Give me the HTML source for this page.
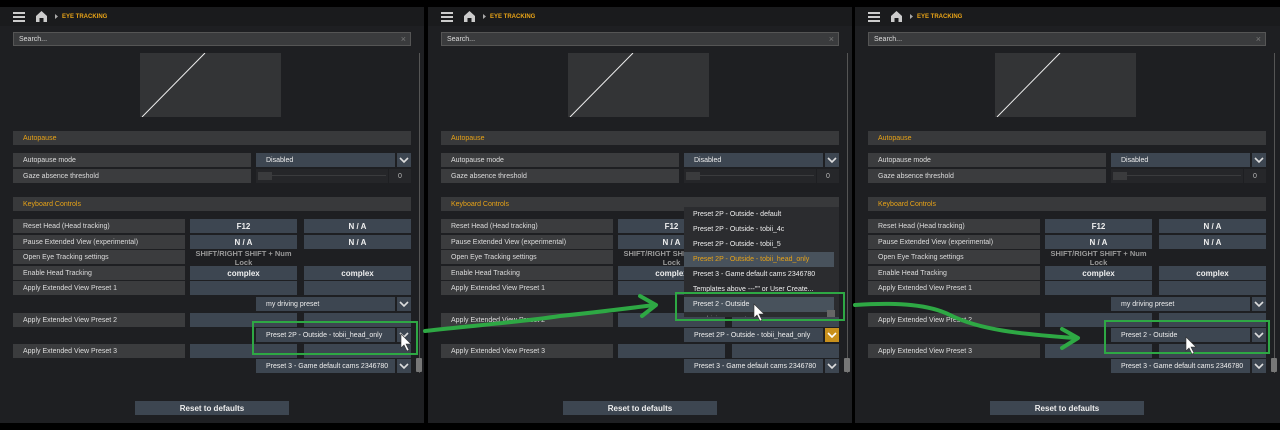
<!DOCTYPE html>
<html><head><meta charset="utf-8"><style>
*{margin:0;padding:0;box-sizing:border-box}
body{width:1280px;height:430px;background:#000;position:relative;overflow:hidden;font-family:"Liberation Sans",sans-serif;font-size:7px;color:#ddd;white-space:nowrap}
.p{position:absolute;top:7px;width:424px;height:416px;background:#1e1f22;overflow:hidden}
.p>.in{position:absolute;left:0;top:-7px;width:100%;height:430px}
.p div{position:absolute}
.bar{left:0;top:7px;width:100%;height:19px;background:#1a1b1d}
.hb{left:13px;width:12px;height:2px;background:#ccc}
.crumb{left:62px;top:14px;color:#e8a317;font-weight:bold;font-size:6px}
.search{left:13px;top:32px;width:398px;height:14px;background:#3a3b3d;border:1px solid #555;padding:3px 5px;color:#ddd}
.graph{left:140px;top:53px;width:141px;height:64px;background:#333436}
.sb{left:419px;top:53px;width:1px;height:320px;background:#555}
.th{left:416px;top:358px;width:6px;height:14px;background:#777;border-radius:1px}
.hdr{left:13px;width:398px;height:14px;background:#38393b;color:#e8a317;padding:4px 10px}
.lbl{left:13px;width:172px;height:14px;background:#3b3c3e;padding:4px 10px;color:#ddd}
.lbl.w{width:238px}
.dd{left:256px;width:139px;height:14px;background:#3d4651;padding:4px 10px;color:#eee;overflow:hidden}
.ch{left:397px;width:14px;height:14px;background:#3d4651}
.ch svg{position:absolute;left:2px;top:3px}
.k1,.k2{width:107px;height:14px;background:#3d4651;text-align:center;font-weight:bold;font-size:8px;color:#eee;padding-top:3px}
.k1{left:190px}.k2{left:304px}
.reset{left:135px;top:401px;width:154px;height:14px;background:#3d4651;text-align:center;font-weight:bold;font-size:8px;padding-top:3px;color:#eee}
.g{border:2px solid #2ea844}
.list{left:256px;top:207px;width:155px;height:110px;background:#2b2c2f;overflow:hidden}
.li{left:0;width:150px;height:15px;padding:4px 9px;color:#eee}
.sk{left:190px;top:249px;width:107px;text-align:center;font-weight:bold;font-size:7.5px;color:#999;line-height:9px;white-space:normal}
</style></head><body>

<div class="p" style="left:0"><div class="in">
<div class="bar"></div>
<div class="hb" style="top:12px"></div><div class="hb" style="top:16px"></div><div class="hb" style="top:20px"></div>
<svg style="position:absolute;left:36px;top:11px" width="11" height="11"><path d="M0 5 L5.5 0 L11 5 V11 H7.5 V7 H3.5 V11 H0Z" fill="#ccc"/></svg>
<svg style="position:absolute;left:55px;top:14px" width="4" height="5"><path d="M0 0 L3 2.5 L0 5Z" fill="#aaa"/></svg>
<div class="crumb">EYE TRACKING</div>
<div class="search">Search...<span style="position:absolute;right:4px;top:1px;color:#777;font-size:9px">×</span></div>
<div class="graph"><svg width="141" height="64"><line x1="2" y1="64" x2="65" y2="0" stroke="#eee" stroke-width="1"/></svg></div>
<div class="sb"></div><div class="th"></div>
<div class="hdr" style="top:131px">Autopause</div>
<div class="lbl w" style="top:153px">Autopause mode</div>
<div class="dd" style="top:153px">Disabled</div>
<div class="ch" style="top:153px"><svg width="10" height="8"><path d="M1 2 L5 6 L9 2" stroke="#ddd" stroke-width="1.6" fill="none"/></svg></div>
<div class="lbl w" style="top:169px">Gaze absence threshold</div>
<div style="left:256px;top:169px;width:132px;height:14px;background:#252629"><div style="left:2px;top:3px;width:14px;height:8px;background:#3a3b3d"></div><div style="left:16px;top:6px;width:114px;height:1px;background:#3a3b3d"></div></div>
<div style="left:389px;top:169px;width:22px;height:14px;background:#26272a;text-align:center;padding-top:4px;color:#bbb">0</div>
<div class="hdr" style="top:197px">Keyboard Controls</div>
<div class="lbl" style="top:219px">Reset Head (Head tracking)</div><div class="k1" style="top:219px">F12</div><div class="k2" style="top:219px">N / A</div>
<div class="lbl" style="top:235px">Pause Extended View (experimental)</div><div class="k1" style="top:235px">N / A</div><div class="k2" style="top:235px">N / A</div>
<div class="lbl" style="top:250px">Open Eye Tracking settings</div><div class="sk">SHIFT/RIGHT SHIFT + Num Lock</div>
<div class="lbl" style="top:266px">Enable Head Tracking</div><div class="k1" style="top:266px">complex</div><div class="k2" style="top:266px">complex</div>
<div class="lbl" style="top:281px">Apply Extended View Preset 1</div><div class="k1" style="top:281px"></div><div class="k2" style="top:281px"></div>
<div class="dd" style="top:297px">my driving preset</div><div class="ch" style="top:297px"><svg width="10" height="8"><path d="M1 2 L5 6 L9 2" stroke="#ddd" stroke-width="1.6" fill="none"/></svg></div>
<div class="lbl" style="top:313px">Apply Extended View Preset 2</div><div class="k1" style="top:313px"></div><div class="k2" style="top:313px"></div>
<div class="dd" style="top:328px">Preset 2P - Outside - tobii_head_only</div><div class="ch" style="top:328px"><svg width="10" height="8"><path d="M1 2 L5 6 L9 2" stroke="#ddd" stroke-width="1.6" fill="none"/></svg></div>
<div class="lbl" style="top:344px">Apply Extended View Preset 3</div><div class="k1" style="top:344px"></div><div class="k2" style="top:344px"></div>
<div class="dd" style="top:359px">Preset 3 - Game default cams 2346780</div><div class="ch" style="top:359px"><svg width="10" height="8"><path d="M1 2 L5 6 L9 2" stroke="#ddd" stroke-width="1.6" fill="none"/></svg></div>
<div class="reset">Reset to defaults</div>
<div class="g" style="left:252px;top:321px;width:166px;height:34px"></div>
<svg style="position:absolute;left:400px;top:333px" width="14" height="20"><path d="M1 1 L1 15 L4 12 L7 18 L9 17 L6 11 L11 11Z" fill="#fff" stroke="#333" stroke-width=".6"/></svg>
</div></div>

<div class="p" style="left:428px"><div class="in">
<div class="bar"></div>
<div class="hb" style="top:12px"></div><div class="hb" style="top:16px"></div><div class="hb" style="top:20px"></div>
<svg style="position:absolute;left:36px;top:11px" width="11" height="11"><path d="M0 5 L5.5 0 L11 5 V11 H7.5 V7 H3.5 V11 H0Z" fill="#ccc"/></svg>
<svg style="position:absolute;left:55px;top:14px" width="4" height="5"><path d="M0 0 L3 2.5 L0 5Z" fill="#aaa"/></svg>
<div class="crumb">EYE TRACKING</div>
<div class="search">Search...<span style="position:absolute;right:4px;top:1px;color:#777;font-size:9px">×</span></div>
<div class="graph"><svg width="141" height="64"><line x1="2" y1="64" x2="65" y2="0" stroke="#eee" stroke-width="1"/></svg></div>
<div class="sb"></div><div class="th"></div>
<div class="hdr" style="top:131px">Autopause</div>
<div class="lbl w" style="top:153px">Autopause mode</div>
<div class="dd" style="top:153px">Disabled</div>
<div class="ch" style="top:153px"><svg width="10" height="8"><path d="M1 2 L5 6 L9 2" stroke="#ddd" stroke-width="1.6" fill="none"/></svg></div>
<div class="lbl w" style="top:169px">Gaze absence threshold</div>
<div style="left:256px;top:169px;width:132px;height:14px;background:#252629"><div style="left:2px;top:3px;width:14px;height:8px;background:#3a3b3d"></div><div style="left:16px;top:6px;width:114px;height:1px;background:#3a3b3d"></div></div>
<div style="left:389px;top:169px;width:22px;height:14px;background:#26272a;text-align:center;padding-top:4px;color:#bbb">0</div>
<div class="hdr" style="top:197px">Keyboard Controls</div>
<div class="lbl" style="top:219px">Reset Head (Head tracking)</div><div class="k1" style="top:219px">F12</div><div class="k2" style="top:219px">N / A</div>
<div class="lbl" style="top:235px">Pause Extended View (experimental)</div><div class="k1" style="top:235px">N / A</div><div class="k2" style="top:235px">N / A</div>
<div class="lbl" style="top:250px">Open Eye Tracking settings</div><div class="sk">SHIFT/RIGHT SHIFT + Num Lock</div>
<div class="lbl" style="top:266px">Enable Head Tracking</div><div class="k1" style="top:266px">complex</div><div class="k2" style="top:266px">complex</div>
<div class="lbl" style="top:281px">Apply Extended View Preset 1</div><div class="k1" style="top:281px"></div><div class="k2" style="top:281px"></div>
<div class="lbl" style="top:313px">Apply Extended View Preset 2</div><div class="k1" style="top:313px"></div><div class="k2" style="top:313px"></div>
<div class="dd" style="top:328px">Preset 2P - Outside - tobii_head_only</div><div class="ch" style="top:328px;background:#c8901c"><svg width="10" height="8"><path d="M1 2 L5 6 L9 2" stroke="#fff" stroke-width="1.6" fill="none"/></svg></div>
<div class="lbl" style="top:344px">Apply Extended View Preset 3</div><div class="k1" style="top:344px"></div><div class="k2" style="top:344px"></div>
<div class="dd" style="top:359px">Preset 3 - Game default cams 2346780</div><div class="ch" style="top:359px"><svg width="10" height="8"><path d="M1 2 L5 6 L9 2" stroke="#ddd" stroke-width="1.6" fill="none"/></svg></div>
<div class="reset">Reset to defaults</div>
<div class="list">
<div class="li" style="top:0">Preset 2P - Outside - default</div>
<div class="li" style="top:15px">Preset 2P - Outside - tobii_4c</div>
<div class="li" style="top:30px">Preset 2P - Outside - tobii_5</div>
<div class="li" style="top:45px;background:#48525c;color:#e8a317">Preset 2P - Outside - tobii_head_only</div>
<div class="li" style="top:60px">Preset 3 - Game default cams 2346780</div>
<div class="li" style="top:75px">Templates above ---"" or User Create...</div>
<div class="li" style="top:90px;background:#48525c">Preset 2 - Outside</div>
<div class="li" style="top:105px;color:#888">my driving preset</div>
<div style="left:143px;top:103px;width:8px;height:14px;background:#666"></div>
</div>
<div class="g" style="left:247px;top:292px;width:170px;height:29px"></div>
<svg style="position:absolute;left:325px;top:303px" width="14" height="20"><path d="M1 1 L1 15 L4 12 L7 18 L9 17 L6 11 L11 11Z" fill="#fff" stroke="#333" stroke-width=".6"/></svg>
</div></div>

<div class="p" style="left:855px;width:425px"><div class="in">
<div class="bar"></div>
<div class="hb" style="top:12px"></div><div class="hb" style="top:16px"></div><div class="hb" style="top:20px"></div>
<svg style="position:absolute;left:36px;top:11px" width="11" height="11"><path d="M0 5 L5.5 0 L11 5 V11 H7.5 V7 H3.5 V11 H0Z" fill="#ccc"/></svg>
<svg style="position:absolute;left:55px;top:14px" width="4" height="5"><path d="M0 0 L3 2.5 L0 5Z" fill="#aaa"/></svg>
<div class="crumb">EYE TRACKING</div>
<div class="search">Search...<span style="position:absolute;right:4px;top:1px;color:#777;font-size:9px">×</span></div>
<div class="graph"><svg width="141" height="64"><line x1="2" y1="64" x2="65" y2="0" stroke="#eee" stroke-width="1"/></svg></div>
<div class="sb"></div><div class="th"></div>
<div class="hdr" style="top:131px">Autopause</div>
<div class="lbl w" style="top:153px">Autopause mode</div>
<div class="dd" style="top:153px">Disabled</div>
<div class="ch" style="top:153px"><svg width="10" height="8"><path d="M1 2 L5 6 L9 2" stroke="#ddd" stroke-width="1.6" fill="none"/></svg></div>
<div class="lbl w" style="top:169px">Gaze absence threshold</div>
<div style="left:256px;top:169px;width:132px;height:14px;background:#252629"><div style="left:2px;top:3px;width:14px;height:8px;background:#3a3b3d"></div><div style="left:16px;top:6px;width:114px;height:1px;background:#3a3b3d"></div></div>
<div style="left:389px;top:169px;width:22px;height:14px;background:#26272a;text-align:center;padding-top:4px;color:#bbb">0</div>
<div class="hdr" style="top:197px">Keyboard Controls</div>
<div class="lbl" style="top:219px">Reset Head (Head tracking)</div><div class="k1" style="top:219px">F12</div><div class="k2" style="top:219px">N / A</div>
<div class="lbl" style="top:235px">Pause Extended View (experimental)</div><div class="k1" style="top:235px">N / A</div><div class="k2" style="top:235px">N / A</div>
<div class="lbl" style="top:250px">Open Eye Tracking settings</div><div class="sk">SHIFT/RIGHT SHIFT + Num Lock</div>
<div class="lbl" style="top:266px">Enable Head Tracking</div><div class="k1" style="top:266px">complex</div><div class="k2" style="top:266px">complex</div>
<div class="lbl" style="top:281px">Apply Extended View Preset 1</div><div class="k1" style="top:281px"></div><div class="k2" style="top:281px"></div>
<div class="dd" style="top:297px">my driving preset</div><div class="ch" style="top:297px"><svg width="10" height="8"><path d="M1 2 L5 6 L9 2" stroke="#ddd" stroke-width="1.6" fill="none"/></svg></div>
<div class="lbl" style="top:313px">Apply Extended View Preset 2</div><div class="k1" style="top:313px"></div><div class="k2" style="top:313px"></div>
<div class="dd" style="top:328px">Preset 2 - Outside</div><div class="ch" style="top:328px"><svg width="10" height="8"><path d="M1 2 L5 6 L9 2" stroke="#ddd" stroke-width="1.6" fill="none"/></svg></div>
<div class="lbl" style="top:344px">Apply Extended View Preset 3</div><div class="k1" style="top:344px"></div><div class="k2" style="top:344px"></div>
<div class="dd" style="top:359px">Preset 3 - Game default cams 2346780</div><div class="ch" style="top:359px"><svg width="10" height="8"><path d="M1 2 L5 6 L9 2" stroke="#ddd" stroke-width="1.6" fill="none"/></svg></div>
<div class="reset">Reset to defaults</div>
<div class="g" style="left:249px;top:320px;width:166px;height:34px"></div>
<svg style="position:absolute;left:330px;top:336px" width="14" height="20"><path d="M1 1 L1 15 L4 12 L7 18 L9 17 L6 11 L11 11Z" fill="#fff" stroke="#333" stroke-width=".6"/></svg>
</div></div>

<svg style="position:absolute;left:0;top:0" width="1280" height="430">
<g stroke="#2ea844" stroke-width="4" fill="none" stroke-linecap="round" stroke-linejoin="round">
<path d="M425 331 C480 325 520 322 560 316 C600 312 630 308 655 305"/>
<path d="M640 296 L656 305 L642 316"/>
<path d="M855 305 C900 302 930 305 950 315 C980 330 1020 334 1075 338"/>
<path d="M1062 329 L1078 338 L1062 348"/>
</g>
</svg>
</body></html>
